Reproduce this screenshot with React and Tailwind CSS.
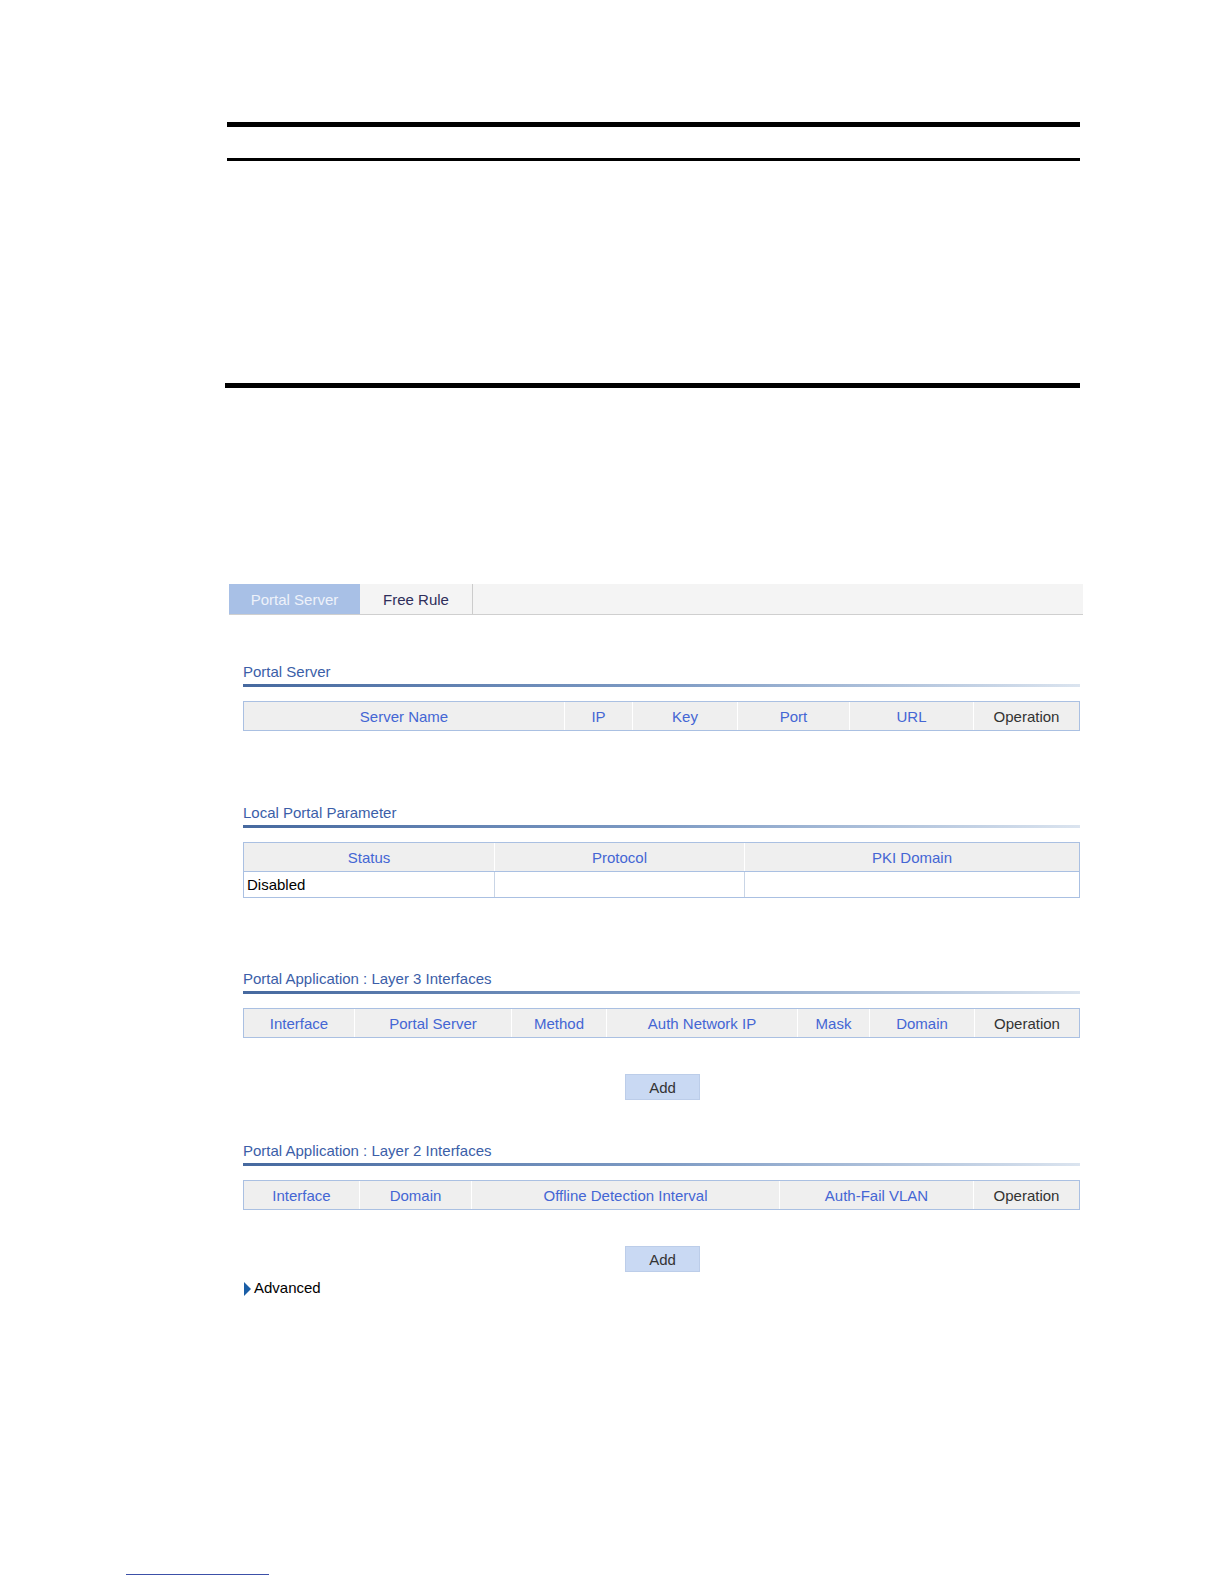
import React from "react";

const F = "font-['Liberation_Sans',Arial,sans-serif]";

function Title({ children, mt }) {
  return (
    <div className={mt}>
      <div className="h-[17px] leading-[17px] text-[15px] text-[#3b5ea8]">{children}</div>
      <div className="mt-[4px] h-[3px] w-[837px] bg-linear-to-r from-[#46699f] via-[#7e9bc4] to-[#dbe4ef]" />
    </div>
  );
}

function HeaderRow({ cols, cells }) {
  return (
    <div className={`grid ${cols} h-[28px] bg-[#efefef]`}>
      {cells.map((c, i) => (
        <div
          key={i}
          className={`flex items-center justify-center pt-[3px] text-[15px] ${
            c === "Operation" ? "text-[#333333]" : "text-[#4466d4]"
          } ${i > 0 ? "border-l border-white" : ""}`}
        >
          {c}
        </div>
      ))}
    </div>
  );
}

function Table({ cols, cells, row }) {
  return (
    <div className="mt-[14px] w-[837px] border border-[#aac0e2]">
      <HeaderRow cols={cols} cells={cells} />
      {row && (
        <div className={`grid ${cols} h-[26px] bg-white border-t border-[#aac0e2]`}>
          {row.map((c, i) => (
            <div
              key={i}
              className={`flex items-center pl-[3px] pt-[1px] text-[15px] text-black ${
                i > 0 ? "border-l border-[#c9d5e6]" : ""
              }`}
            >
              {c}
            </div>
          ))}
        </div>
      )}
    </div>
  );
}

function AddButton() {
  return (
    <div className="mt-[36px] flex w-[837px]">
      <div className="ml-[382px] flex h-[26px] w-[75px] items-center justify-center pt-[2px] border border-[#bccde9] bg-[#c9d9f3] text-[15px] text-[#333333]">
        Add
      </div>
    </div>
  );
}

export default function App() {
  return (
    <div className={`${F} relative h-[1584px] w-[1224px] bg-white`}>
      <div className="pt-[122px]">
        <div className="ml-[227px] h-[5px] w-[853px] bg-black" />
        <div className="ml-[227px] mt-[31px] h-[3px] w-[853px] bg-black" />
        <div className="ml-[225px] mt-[222px] h-[5px] w-[855px] bg-black" />

        {/* Tab bar */}
        <div className="ml-[229px] mt-[196px] flex h-[31px] w-[854px] border-b border-[#cfcfcf] bg-[#f4f4f4]">
          <div className="flex h-[30px] w-[131px] items-center justify-center pt-[3px] bg-[#a8c0e6] text-[15px] text-[#eef2fa]">
            Portal Server
          </div>
          <div className="flex h-[30px] w-[113px] items-center justify-center pt-[3px] border-r border-[#cccccc] text-[15px] text-[#2e2e5a]">
            Free Rule
          </div>
        </div>

        <div className="ml-[243px]">
          <Title mt="mt-[48px]">Portal Server</Title>
          <Table
            cols="grid-cols-[320px_68px_105px_112px_124px_1fr]"
            cells={["Server Name", "IP", "Key", "Port", "URL", "Operation"]}
          />

          <Title mt="mt-[73px]">Local Portal Parameter</Title>
          <Table
            cols="grid-cols-[250px_250px_1fr]"
            cells={["Status", "Protocol", "PKI Domain"]}
            row={["Disabled", "", ""]}
          />

          <Title mt="mt-[72px]">Portal Application : Layer 3 Interfaces</Title>
          <Table
            cols="grid-cols-[110px_157px_95px_191px_72px_105px_1fr]"
            cells={["Interface", "Portal Server", "Method", "Auth Network IP", "Mask", "Domain", "Operation"]}
          />
          <AddButton />

          <Title mt="mt-[42px]">Portal Application : Layer 2 Interfaces</Title>
          <Table
            cols="grid-cols-[115px_112px_308px_194px_1fr]"
            cells={["Interface", "Domain", "Offline Detection Interval", "Auth-Fail VLAN", "Operation"]}
          />
          <div className="mt-[1px]">
            <AddButton />
          </div>

          <div className="mt-[8px] flex h-[17px] items-center text-[15px] text-black">
            <svg width="9" height="16" viewBox="0 0 9 16" className="ml-[1px]">
              <polygon points="0,1 7,8 0,15" fill="#1a5ea6" />
            </svg>
            <span className="ml-[1px]">Advanced</span>
          </div>
        </div>

        <div className="ml-[126px] mt-[277px] h-[1px] w-[143px] bg-[#3c50a8]" />
      </div>
    </div>
  );
}
